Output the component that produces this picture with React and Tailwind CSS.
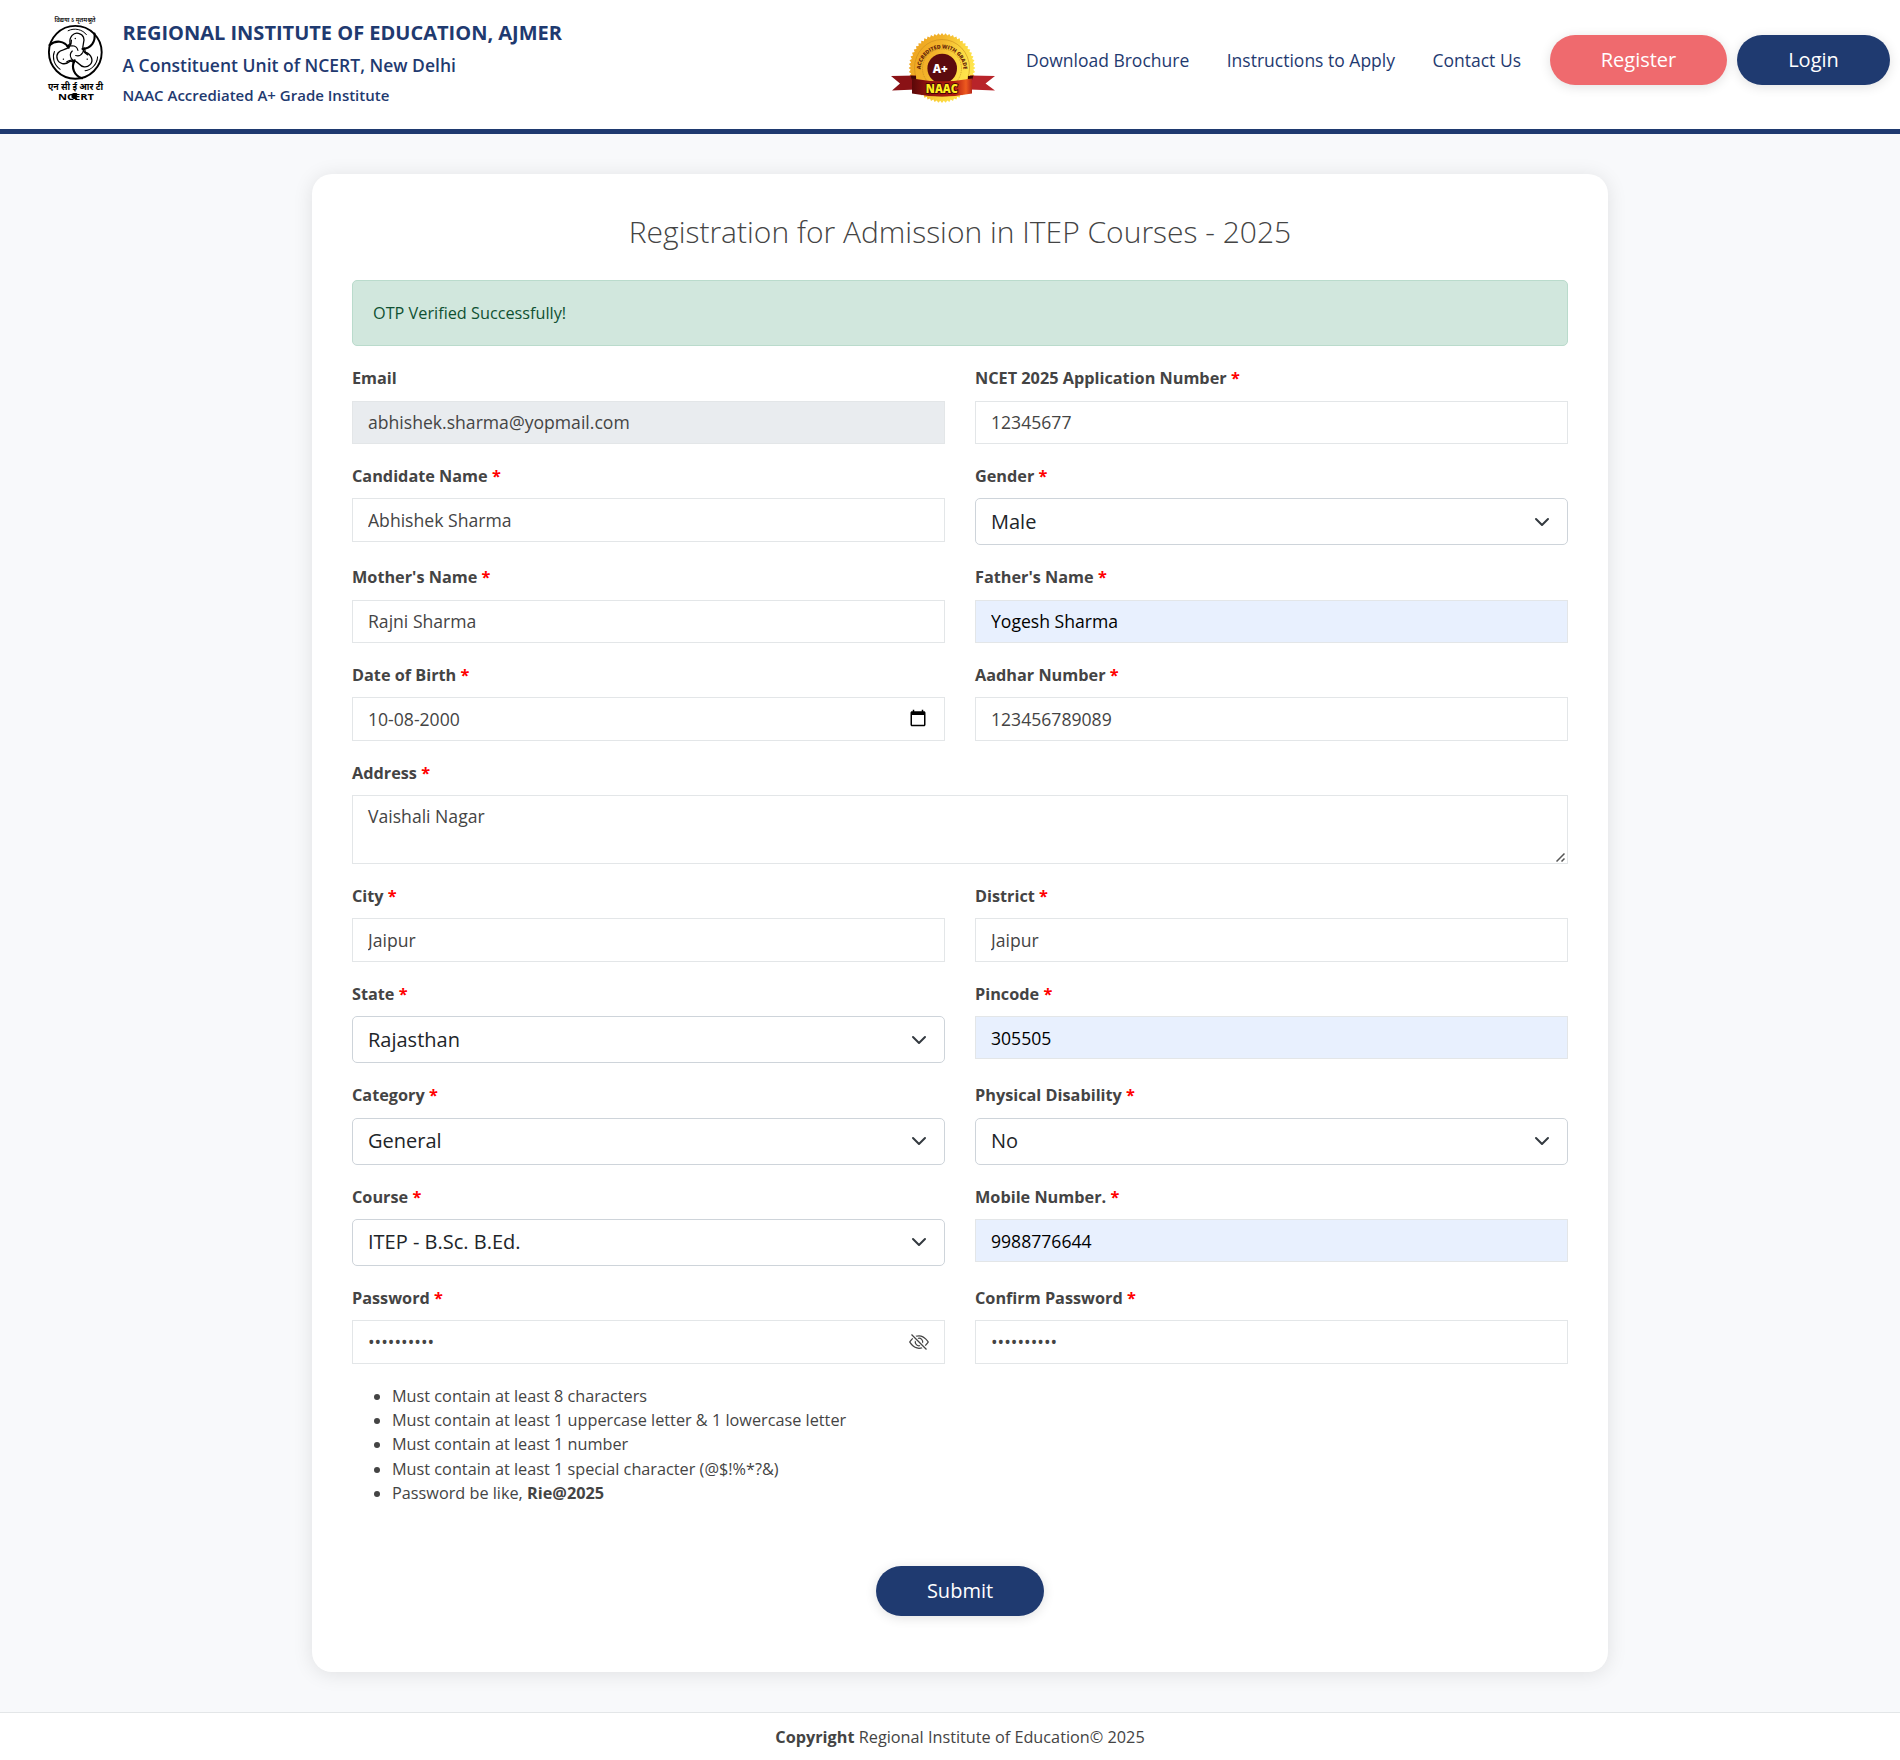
import React from "react";

const label = "block h-[24.3px] text-[16.25px] leading-[24.3px] font-bold text-[#444]";
const box = "block h-[43.2px] w-full border border-[#e3e6e8] px-[15px] text-[17.6px] leading-[27px] outline-none";

function Label({ text, required = true }) {
  return (
    <label className={label}>
      {text} {required && <span className="text-[#f00]">*</span>}
    </label>
  );
}

function Field({ text, value, required, disabled, filled, type = "text", icon }) {
  const tone = disabled
    ? "bg-[#e9ecef] text-[#444]"
    : filled
      ? "bg-[#e8f0fe] text-black"
      : "bg-white text-[#444]";
  return (
    <div className="flex flex-col gap-[10.1px]">
      <Label text={text} required={required} />
      <div className="relative">
        <input type={type} readOnly defaultValue={value} className={`${box} ${tone}`} />
        {icon}
      </div>
    </div>
  );
}

function SelectField({ text, value }) {
  return (
    <div className="flex flex-col gap-[10.1px]">
      <Label text={text} />
      <button
        type="button"
        className="flex h-[47px] w-full items-center justify-between rounded-[5px] border border-[#ced4da] bg-white pr-[17px] pl-[15px] text-[20px] leading-[30px] text-[#212529]"
      >
        <span>{value}</span>
        <svg viewBox="0 0 16 16" className="size-4" fill="none" stroke="#343a40" strokeWidth="2" strokeLinecap="round" strokeLinejoin="round">
          <path d="m2 5 6 6 6-6" />
        </svg>
      </button>
    </div>
  );
}

function CalendarIcon() {
  return (
    <svg viewBox="0 0 24 24" className="absolute top-[12px] right-[18px] h-[18px] w-[18px]" fill="#000">
      <path d="M20 3h-1V1h-2v2H7V1H5v2H4c-1.100 0-2 .9-2 2v16c0 1.100.9 2 2 2h16c1.100 0 2-.9 2-2V5c0-1.100-.9-2-2-2zm0 18H4V8h16v13z" />
    </svg>
  );
}

function EyeOffIcon() {
  return (
    <svg viewBox="0 0 16 16" className="absolute top-[12px] right-[16px] size-5" fill="#444">
      <path d="M13.359 11.238C15.06 9.72 16 8 16 8s-3-5.5-8-5.5a7 7 0 0 0-2.79.588l.77.771A6 6 0 0 1 8 3.5c2.12 0 3.879 1.168 5.168 2.457A13 13 0 0 1 14.828 8q-.086.13-.195.288c-.335.48-.83 1.12-1.465 1.755q-.247.248-.517.486z" />
      <path d="M11.297 9.176a3.5 3.5 0 0 0-4.474-4.474l.823.823a2.5 2.5 0 0 1 2.829 2.829zm-2.943 1.299.822.822a3.5 3.5 0 0 1-4.474-4.474l.823.823a2.5 2.5 0 0 0 2.829 2.829" />
      <path d="M3.35 5.47q-.27.24-.518.487A13 13 0 0 0 1.172 8l.195.288c.335.48.83 1.12 1.465 1.755C4.121 11.332 5.881 12.5 8 12.5c.716 0 1.39-.133 2.02-.36l.77.772A7 7 0 0 1 8 13.5C3 13.5 0 8 0 8s.939-1.721 2.641-3.238l.708.709zm10.296 8.884-12-12 .708-.708 12 12z" />
    </svg>
  );
}

function NcertLogo() {
  return (
    <svg viewBox="0 0 60 88" className="h-[88px] w-[60px] shrink-0 overflow-visible" fontFamily='"Noto Sans", sans-serif' textAnchor="middle">
      <text x="30" y="8" fontSize="6.2" fontWeight="600" textLength="41" lengthAdjust="spacingAndGlyphs">विद्यया ऽ मृतमश्नुते</text>
      <circle cx="30.3" cy="38.3" r="26.4" fill="none" stroke="#000" strokeWidth="1.9" />
      <g transform="translate(30.3 38.3) scale(.327)" fill="none" stroke="#000" strokeLinecap="round" strokeLinejoin="round">
        {[0, 120, 240].map((a) => (
          <g key={a} transform={`rotate(${a})`}>
            <path d="M-79-22C-60-38-34-36-20-14" strokeWidth="6.5" />
            <path d="M-16-26C-20-48-4-62 10-58C26-54 29-40 25-28C20-10 26 2 38 8" strokeWidth="4" />
            <path d="M-16-26L-26-18L-10-20C0-20 6-14 8-6" strokeWidth="3.5" />
            <path d="M-22-66C-2-76 22-70 34-54" strokeWidth="3" />
            <circle cx="0" cy="-42" r="2.2" fill="#000" stroke="none" />
          </g>
        ))}
      </g>
      <text x="30.5" y="76" fontSize="9.5" fontWeight="700" textLength="55" lengthAdjust="spacingAndGlyphs">एन सी ई आर टी</text>
      <text x="31" y="85.5" fontSize="9.5" fontWeight="700" fontFamily='"Open Sans", sans-serif' textLength="36" lengthAdjust="spacingAndGlyphs">NCERT</text>
      <path d="M26.500 80l2-1h4l-1.500 1.500 1.500 1.500-1.500 1.500 1.500 1.500h-4l-2-1.500z" />
    </svg>
  );
}

function NaacSeal() {
  const teeth = Array.from({ length: 112 }, (_, i) => {
    const k = i % 2 ? 0.94 : 1;
    const a = (i / 112) * Math.PI * 2;
    return `${(51 + 33.3 * k * Math.cos(a)).toFixed(2)},${(36 + 35 * k * Math.sin(a)).toFixed(2)}`;
  }).join(" ");
  return (
    <svg viewBox="0 0 104 72" className="h-[72px] w-[104px] shrink-0" fontFamily='"Open Sans", sans-serif' textAnchor="middle">
      <defs>
        <linearGradient id="gold" x1="0" y1="0" x2="1" y2=".4">
          <stop offset="0" stopColor="#eda01e" />
          <stop offset=".45" stopColor="#f2b32a" />
          <stop offset=".75" stopColor="#fbd63f" />
          <stop offset="1" stopColor="#ffe64e" />
        </linearGradient>
        <linearGradient id="band" x1="0" y1="0" x2="1" y2="0">
          <stop offset="0" stopColor="#5a0808" />
          <stop offset=".25" stopColor="#8c1210" />
          <stop offset=".7" stopColor="#b01a10" />
          <stop offset=".9" stopColor="#ee5a1f" />
          <stop offset="1" stopColor="#b8261a" />
        </linearGradient>
        <path id="arc" d="M29.500 38A21.500 21.500 0 0 1 72.500 38" />
      </defs>
      <polygon points={teeth} fill="url(#gold)" />
      <ellipse cx="51" cy="36" rx="27.500" ry="28.500" fill="none" stroke="#c98d1c" strokeWidth=".6" />
      <circle cx="51" cy="36.500" r="19.500" fill="none" stroke="#a8741a" strokeWidth=".5" strokeDasharray="1 .8" />
      <text fontSize="5.400" fontWeight="800" fill="#6b2a0a">
        <textPath href="#arc" startOffset="50%" textLength="66">ACCREDITED WITH GRADE</textPath>
      </text>
      <circle cx="51.200" cy="36.500" r="14.800" fill="#5c0b0e" />
      <path d="M0 44L25 43.500V57.500L1 58.500L9 51.500z" fill="#8a1216" />
      <path d="M104 44L79 43.500V57.500L104 58.500L94.500 51.500z" fill="#b8242a" />
      <path d="M19.500 43.500l5.500.5v4l-4 0z" fill="#3d0505" />
      <path d="M82.500 43.500l-5.500.5v4l4 0z" fill="#3d0505" />
      <path d="M21 46.500Q51 52 81 46.500V61.500Q51 67.500 21 61.500Z" fill="url(#band)" />
      <text x="49.300" y="41" fontSize="11.500" fontWeight="800" fill="#fff">A+</text>
      <text x="50.800" y="60.500" fontSize="11.500" fontWeight="800" fill="#ffee1f" stroke="#4a0606" strokeWidth="1.800" paintOrder="stroke" textLength="32" lengthAdjust="spacingAndGlyphs">NAAC</text>
    </svg>
  );
}

export default function App() {
  return (
    <div className="flex h-[1760px] w-full flex-col overflow-hidden bg-[#f8f9fb] font-['Open_Sans',sans-serif] text-[#444]">
      <header className="flex h-[134px] shrink-0 items-start border-b-[5px] border-[#1f3a70] bg-white pr-[10px] pl-[45px] text-[#1f3a70]">
        <div className="mt-[14px]">
          <NcertLogo />
        </div>
        <div className="mt-[17px] ml-[17.500px] flex flex-col whitespace-nowrap">
          <span className="text-[20px] leading-8 font-bold">REGIONAL INSTITUTE OF EDUCATION, AJMER</span>
          <span className="text-[17.500px] leading-8 font-semibold">A Constituent Unit of NCERT, New Delhi</span>
          <span className="text-[15px] leading-7 font-semibold">NAAC Accrediated A+ Grade Institute</span>
        </div>
        <div className="ml-auto flex items-center">
          <div className="mt-[31.500px] self-start">
            <NaacSeal />
          </div>
          <nav className="mt-[35px] ml-[31px] flex h-[50px] items-center gap-[37.500px] self-start text-[17.500px] whitespace-nowrap">
            <a>Download Brochure</a>
            <a>Instructions to Apply</a>
            <a>Contact Us</a>
          </nav>
          <div className="mt-[35px] ml-[29px] flex gap-[10px] self-start text-[20px] text-white">
            <button className="h-[50px] w-[177px] rounded-full bg-[#ef6a6e] shadow-[0_2px_12px_rgba(0,0,0,0.12)]">Register</button>
            <button className="h-[50px] w-[153px] rounded-full bg-[#1f3a70] shadow-[0_2px_12px_rgba(0,0,0,0.12)]">Login</button>
          </div>
        </div>
      </header>

      <main className="mt-10 ml-[312px] h-[1498px] w-[1296px] shrink-0 rounded-[20px] bg-white px-10 shadow-[0_2px_20px_rgba(0,0,0,0.1)]">
        <h1 className="pt-[35px] text-center text-[30px] leading-[45px] font-light">
          Registration for Admission in ITEP Courses - 2025
        </h1>
        <div className="mt-[26px] flex h-[66px] items-center rounded-[5px] border border-[#badbcc] bg-[#d1e7dd] px-[20px] text-[16.250px] text-[#0f5132]">
          OTP Verified Successfully!
        </div>

        <form className="mt-[20.300px] grid grid-cols-2 gap-x-[30px] gap-y-[20.050px]">
          <Field text="Email" value="abhishek.sharma@yopmail.com" required={false} disabled />
          <Field text="NCET 2025 Application Number" value="12345677" />
          <Field text="Candidate Name" value="Abhishek Sharma" />
          <SelectField text="Gender" value="Male" />
          <Field text="Mother's Name" value="Rajni Sharma" />
          <Field text="Father's Name" value="Yogesh Sharma" filled />
          <Field text="Date of Birth" value="10-08-2000" icon={<CalendarIcon />} />
          <Field text="Aadhar Number" value="123456789089" />
          <div className="col-span-2 flex flex-col gap-[10.100px]">
            <Label text="Address" />
            <div className="relative">
              <textarea
                readOnly
                defaultValue="Vaishali Nagar"
                className="block h-[69px] w-full resize-none border border-[#e3e6e8] px-[15px] py-[7px] text-[17.600px] leading-[27px] outline-none"
              />
              <svg viewBox="0 0 9 9" className="absolute right-[3px] bottom-[2px] size-[9px]" fill="none" stroke="#555" strokeWidth="1.500">
                <path d="M.5 8.500l8-8M5.500 8.500l3-3" />
              </svg>
            </div>
          </div>
          <Field text="City" value="Jaipur" />
          <Field text="District" value="Jaipur" />
          <SelectField text="State" value="Rajasthan" />
          <Field text="Pincode" value="305505" filled />
          <SelectField text="Category" value="General" />
          <SelectField text="Physical Disability" value="No" />
          <SelectField text="Course" value="ITEP - B.Sc. B.Ed." />
          <Field text="Mobile Number." value="9988776644" filled />
          <Field text="Password" value="Rie@202512" type="password" icon={<EyeOffIcon />} />
          <Field text="Confirm Password" value="Rie@202512" type="password" />
        </form>

        <ul className="mt-[20.300px] list-disc pl-[40px] text-[16.250px] leading-[24.300px]">
          <li>Must contain at least 8 characters</li>
          <li>Must contain at least 1 uppercase letter &amp; 1 lowercase letter</li>
          <li>Must contain at least 1 number</li>
          <li>Must contain at least 1 special character (@$!%*?&amp;)</li>
          <li>Password be like, <b>Rie@2025</b></li>
        </ul>
        <div className="mt-[61px] flex justify-center">
          <button className="h-[50px] w-[168px] rounded-full bg-[#1f3a70] text-[20px] text-white shadow-[0_2px_12px_rgba(0,0,0,0.12)]">Submit</button>
        </div>
      </main>

      <footer className="mt-10 h-[48px] shrink-0 border-t border-[#e3e6e8] bg-white pt-[12px] pl-[20px] text-center text-[16.250px] leading-6">
        <b>Copyright</b> Regional Institute of Education© 2025
      </footer>
    </div>
  );
}
